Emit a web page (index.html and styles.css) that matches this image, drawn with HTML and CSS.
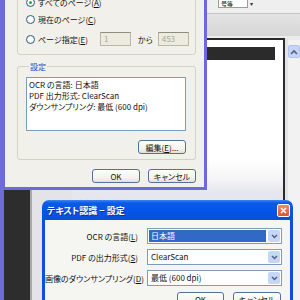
FILE: index.html
```html
<!DOCTYPE html>
<html lang="ja">
  <head>
    <meta charset="UTF-8" />
    <title>テキスト認識 - 設定</title>
    <link rel="stylesheet" href="styles.css">
  </head>
  <body>
    <div class="desk">
      <!-- 背景のアプリ -->
      <div class="app">
        <div class="app-edge"></div>
        <div class="app-nav"></div>
        <div class="app-main">
          <div class="toolbar">
            <span class="zoombox">号等</span>
            <span class="zoomarrow">▾</span>
          </div>
          <div class="toolband"></div>
          <div class="docarea">
            <div class="pagewrap">
              <div class="page"><div class="page-head"></div></div>
            </div>
            <div class="vscroll">
              <div class="vscroll-up">
                <svg width="8" height="6" viewBox="0 0 8 6"><path d="M1 5 L4 2 L7 5" fill="none" stroke="#4d6185" stroke-width="1.6"/></svg>
              </div>
            </div>
          </div>
        </div>
      </div>

      <!-- 印刷範囲ダイアログ -->
      <div class="dlg-print">
        <div class="group">
          <div class="radio-row">
            <span class="radio checked"></span>
            <span>すべてのページ(<u>A</u>)</span>
          </div>
          <div class="radio-row">
            <span class="radio"></span>
            <span>現在のページ(<u>C</u>)</span>
          </div>
          <div class="radio-row range">
            <span class="radio"></span>
            <span class="range-label">ページ指定(<u>E</u>)</span>
            <span class="field">1</span>
            <span class="range-to">から</span>
            <span class="field">453</span>
          </div>
        </div>

        <fieldset class="settings">
          <legend>設定</legend>
          <div class="listbox">
            <div>OCR の言語: 日本語</div>
            <div>PDF 出力形式: ClearScan</div>
            <div>ダウンサンプリング: 最低 (600 dpi)</div>
          </div>
          <div class="btn-row">
            <button class="btn">編集(<u>E</u>)...</button>
          </div>
        </fieldset>

        <div class="btn-row footer">
          <button class="btn">OK</button>
          <button class="btn">キャンセル</button>
        </div>
      </div>

      <!-- テキスト認識 - 設定 -->
      <div class="dlg-ocr">
        <div class="titlebar">
          <span class="title">テキスト認識 − 設定</span>
          <span class="close">
            <svg width="7" height="7" viewBox="0 0 7 7"><path d="M1 1 L6 6 M6 1 L1 6" stroke="#fff" stroke-width="1.6"/></svg>
          </span>
        </div>
        <div class="dlg-body">
          <div class="form">
            <label>OCR の言語(<u>L</u>)</label>
            <div class="combo">
              <span class="combo-value selected">日本語</span>
              <span class="combo-btn"><svg width="7" height="5" viewBox="0 0 7 5"><path d="M1 1 L3.5 3.5 L6 1" fill="none" stroke="#4d6185" stroke-width="1.5"/></svg></span>
            </div>
            <label>PDF の出力形式(<u>S</u>)</label>
            <div class="combo">
              <span class="combo-value">ClearScan</span>
              <span class="combo-btn"><svg width="7" height="5" viewBox="0 0 7 5"><path d="M1 1 L3.5 3.5 L6 1" fill="none" stroke="#4d6185" stroke-width="1.5"/></svg></span>
            </div>
            <label>画像のダウンサンプリング(<u>D</u>)</label>
            <div class="combo">
              <span class="combo-value">最低 (600 dpi)</span>
              <span class="combo-btn"><svg width="7" height="5" viewBox="0 0 7 5"><path d="M1 1 L3.5 3.5 L6 1" fill="none" stroke="#4d6185" stroke-width="1.5"/></svg></span>
            </div>
          </div>
          <div class="btn-row ocr-footer">
            <button class="btn ok">OK</button>
            <button class="btn">キャンセル</button>
          </div>
        </div>
      </div>
    </div>
  </body>
</html>
```

FILE: styles.css
```css
html,
body {
  margin: 0;
  padding: 0;
}

body {
  width: 300px;
  height: 300px;
  overflow: hidden;
  font-family: "Noto Sans CJK JP", sans-serif;
  font-size: 8px;
  color: #111;
  font-feature-settings: "palt";
}

.desk {
  position: relative;
  width: 300px;
  height: 300px;
  overflow: hidden;
  background: #ececec;
}

/* 背景アプリ */
.app {
  display: flex;
  height: 300px;
}
.app-edge {
  width: 4px;
  background: #6d6dd5;
}
.app-nav {
  width: 26px;
  background: #2d2d2d;
  border-right: 2px solid #a9a9a9;
}
.app-main {
  flex: 1;
  display: flex;
  flex-direction: column;
  background: #ebebeb;
}
.toolbar {
  height: 13px;
  display: flex;
  justify-content: flex-end;
  align-items: flex-start;
  padding-right: 47px;
  background: #efefef;
  box-sizing: border-box;
}
.zoombox {
  width: 30px;
  height: 8px;
  line-height: 7px;
  font-size: 6px;
  padding-left: 2px;
  background: #fff;
  border: 1px solid #9c9c9c;
  border-top: 0;
  box-sizing: border-box;
}
.zoomarrow {
  font-size: 6px;
  line-height: 7px;
  margin-left: 2px;
  color: #333;
}
.toolband {
  height: 25px;
  border-top: 1px solid #c4c4c4;
  border-bottom: 2px solid #ececec;
  background: linear-gradient(#e3e3e3, #d6d6d6);
  box-sizing: border-box;
}
.docarea {
  flex: 1;
  display: flex;
}
.pagewrap {
  flex: 1;
  padding: 0 3px 0 40px;
  background: #e4e4e8;
}
.page {
  height: 100%;
  background: linear-gradient(#fff 120px, #f4f4f6 140px, #e6e6ee 152px);
  border-top: 2px solid #2a2a2a;
  border-right: 2px solid #2a2a2a;
  padding: 7px 8px 0 0;
  box-sizing: border-box;
}
.page-head {
  height: 13px;
  background: #2b2b2b;
}
.vscroll {
  width: 12px;
  margin-top: 2px;
  background: #f2f2f2;
  padding-top: 5px;
  box-sizing: border-box;
}
.vscroll-up {
  height: 13px;
  display: flex;
  align-items: center;
  justify-content: center;
  background: #c6d5f6;
  border: 1px solid #b3c4ea;
  border-radius: 2px;
  box-sizing: border-box;
}

/* 上のダイアログ */
.dlg-print {
  position: absolute;
  left: 2px;
  top: -10px;
  width: 205px;
  height: 200px;
  border: 3px solid #6a6adb;
  background: #f1f0eb;
  padding: 0 8px 0 12px;
  box-sizing: border-box;
}
.group {
  border: 1px solid #d3d2c6;
  border-radius: 3px;
  padding: 0 0 4px 8px;
}
.radio-row {
  height: 17px;
  display: flex;
  align-items: center;
  gap: 3px;
  white-space: nowrap;
}
.radio-row.range {
  height: 22px;
}
.radio {
  width: 9px;
  height: 9px;
  border: 1px solid #2f5a8c;
  border-radius: 50%;
  background: radial-gradient(#fff 40%, #e4e2da);
  box-sizing: border-box;
  display: flex;
  align-items: center;
  justify-content: center;
}
.radio.checked::after {
  content: "";
  width: 3px;
  height: 3px;
  border-radius: 50%;
  background: #27a830;
}
.range-label {
  width: 59px;
}
.field {
  width: 31px;
  height: 14px;
  line-height: 12px;
  padding-left: 3px;
  border: 1px solid #b9b7a6;
  border-top-color: #8f8d80;
  background: #ecebdf;
  color: #a6a59b;
  box-sizing: border-box;
}
.range-to {
  margin: 0 2px 0 4px;
}

.settings {
  margin: 6px 0 0;
  padding: 0 9px 5px 8px;
  border: 1px solid #d3d2c6;
  border-radius: 3px;
}
.settings legend {
  margin-left: 3px;
  padding: 0 1px;
  line-height: 11px;
  color: #1450d0;
}
.listbox {
  margin-top: 5px;
  height: 54px;
  padding: 1px 2px;
  border: 1px solid #7f9db9;
  background: #fff;
  line-height: 11px;
  box-sizing: border-box;
}
.btn-row {
  display: flex;
  justify-content: flex-end;
  gap: 8px;
  margin-top: 9px;
}
.btn {
  width: 48px;
  height: 14px;
  padding: 0;
  font: inherit;
  font-feature-settings: "palt";
  color: #111;
  border: 1px solid #55709a;
  border-radius: 3px;
  background: linear-gradient(#fefefe, #f2f1ec 70%, #e2e0d6);
}
.footer {
  margin-top: 9px;
}

/* テキスト認識 - 設定 */
.dlg-ocr {
  position: absolute;
  left: 42px;
  top: 200px;
  width: 251px;
  height: 110px;
  display: flex;
  flex-direction: column;
}
.titlebar {
  height: 20px;
  display: flex;
  align-items: center;
  justify-content: space-between;
  padding: 0 3px 0 5px;
  border-radius: 7px 7px 0 0;
  background: linear-gradient(#3c86f4, #0a5ae8 15%, #0554e6 60%, #0a4fd8);
}
.title {
  color: #fff;
  font-size: 9px;
  font-weight: bold;
  text-shadow: 1px 1px 0 #0a2f9c;
}
.close {
  width: 13px;
  height: 13px;
  display: flex;
  align-items: center;
  justify-content: center;
  border: 1px solid #fff;
  border-radius: 2px;
  background: linear-gradient(#f08a6a, #de5230);
  box-sizing: border-box;
}
.dlg-body {
  flex: 1;
  border: 3px solid #0b4fe0;
  border-top: 0;
  border-bottom: 0;
  background: #f5f5f2;
  padding: 8px 8px 0 0;
}
.form {
  display: grid;
  grid-template-columns: 93px 135px;
  column-gap: 9px;
  row-gap: 5px;
  align-items: center;
}
.form label {
  text-align: right;
  white-space: nowrap;
}
.combo {
  height: 16px;
  display: flex;
  border: 1px solid #7f9db9;
  background: #fff;
  box-sizing: border-box;
}
.combo-value {
  flex: 1;
  margin: 1px;
  padding-left: 2px;
  line-height: 12px;
}
.combo-value.selected {
  background: #316ac5;
  color: #fff;
}
.combo-btn {
  width: 12px;
  margin: 1px;
  display: flex;
  align-items: center;
  justify-content: center;
  background: #c7d6f8;
  border-radius: 2px;
}
.ocr-footer {
  margin-top: 6px;
  padding-right: 1px;
  gap: 9px;
}
.ocr-footer .btn {
  height: 15px;
}
.ocr-footer .ok {
  width: 47px;
}
```
